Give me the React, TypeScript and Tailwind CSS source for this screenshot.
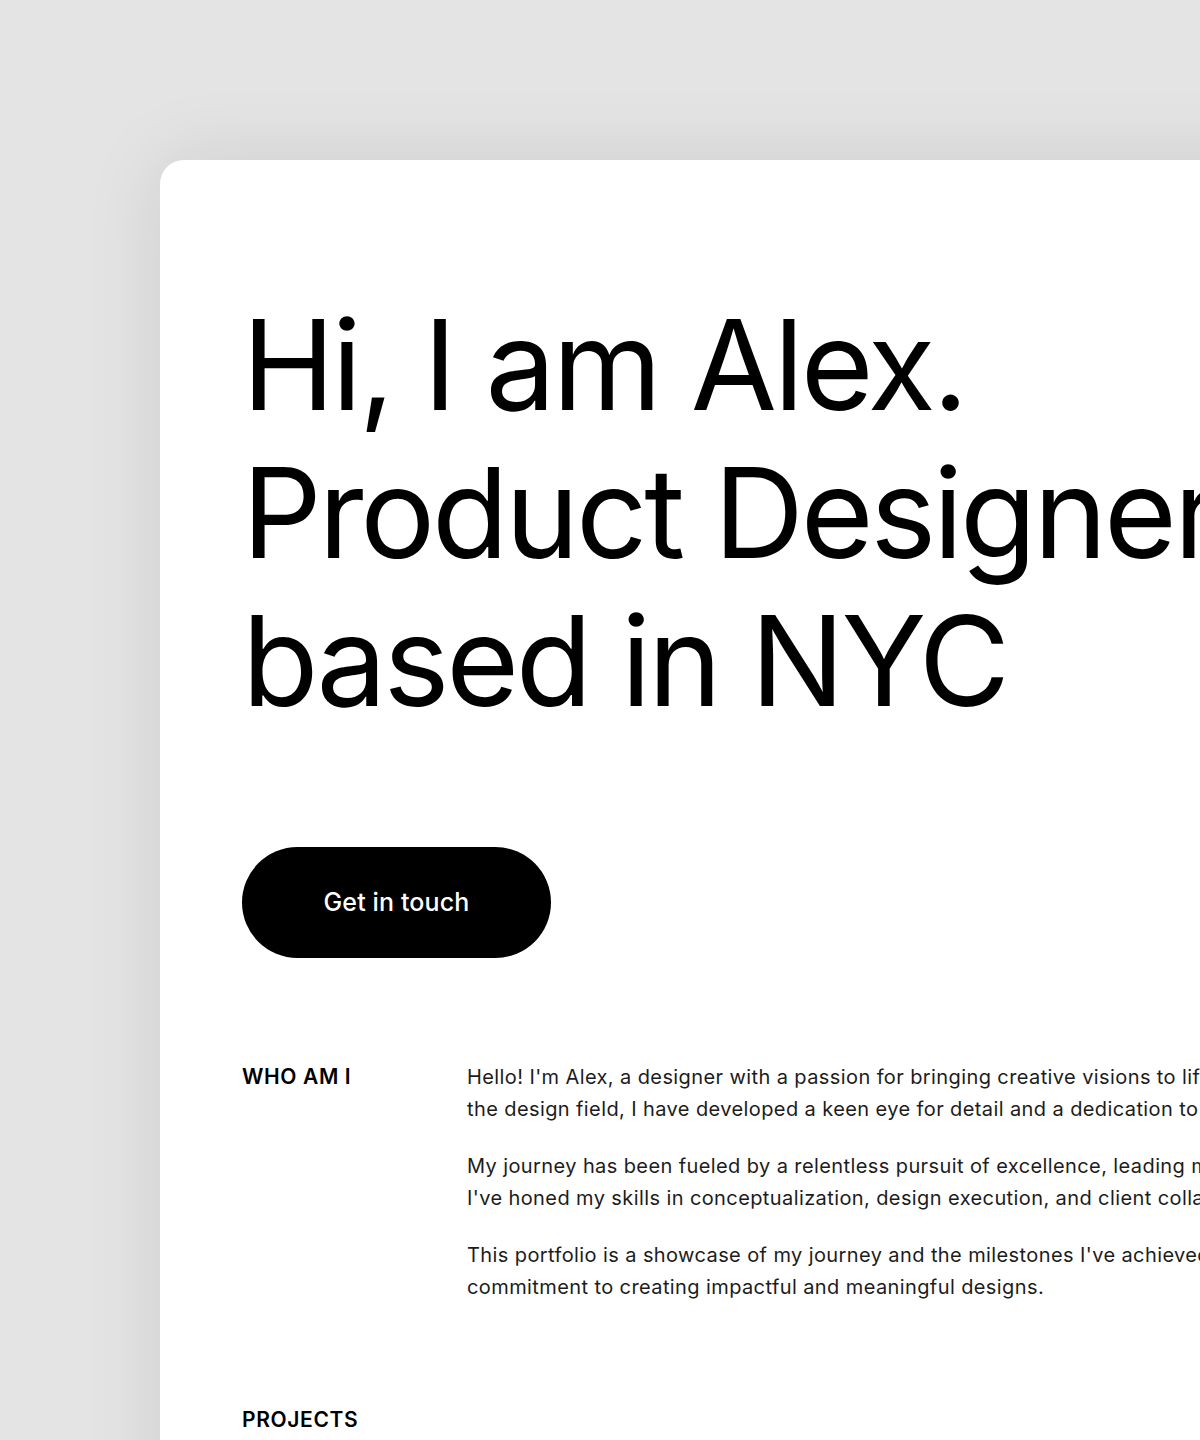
const about = [
  [
    "Hello! I'm Alex, a designer with a passion for bringing creative visions to life. With over 8 years of experience in",
    "the design field, I have developed a keen eye for detail and a dedication to crafting memorable experiences.",
  ],
  [
    "My journey has been fueled by a relentless pursuit of excellence, leading me to work with diverse clients and teams.",
    "I've honed my skills in conceptualization, design execution, and client collaboration along the way.",
  ],
  [
    "This portfolio is a showcase of my journey and the milestones I've achieved, reflecting my passion and",
    "commitment to creating impactful and meaningful designs.",
  ],
];

export default function App() {
  return (
    <div
      className="w-[1200px] h-[1440px] overflow-hidden bg-[#e4e4e4] pt-[160px] pl-[160px]"
      style={{ fontFamily: "Inter, 'Noto Sans', sans-serif" }}
    >
      <div className="w-[1200px] h-[1400px] bg-white rounded-tl-[24px] shadow-[0_0_80px_rgba(0,0,0,0.10)] pl-[82px] pt-[131px]">
        <h1 className="text-[125px] leading-[148px] font-normal text-black tracking-[-0.026em] whitespace-nowrap">
          Hi, I am Alex.
          <br />
          Product Designer
          <br />
          based in NYC
        </h1>

        <button className="mt-[112px] w-[309px] h-[111px] rounded-full bg-black text-white text-[25px] font-medium tracking-[0.005em]">
          Get in touch
        </button>

        <section className="mt-[103px] flex">
          <h2 className="w-[225px] shrink-0 text-[21px] leading-[32px] font-semibold tracking-[0.03em] text-black">
            WHO AM I
          </h2>
          <div className="flex flex-col gap-[25px] text-[20px] leading-[32px] tracking-[0.02em] text-[#1c1c1c]">
            {about.map((lines, i) => (
              <p key={i}>
                {lines.map((l) => (
                  <span key={l} className="block whitespace-nowrap">
                    {l}
                  </span>
                ))}
              </p>
            ))}
          </div>
        </section>

        <section className="mt-[101px]">
          <h2 className="text-[21px] leading-[32px] font-semibold tracking-[0.03em] text-black">PROJECTS</h2>
        </section>
      </div>
    </div>
  );
}
